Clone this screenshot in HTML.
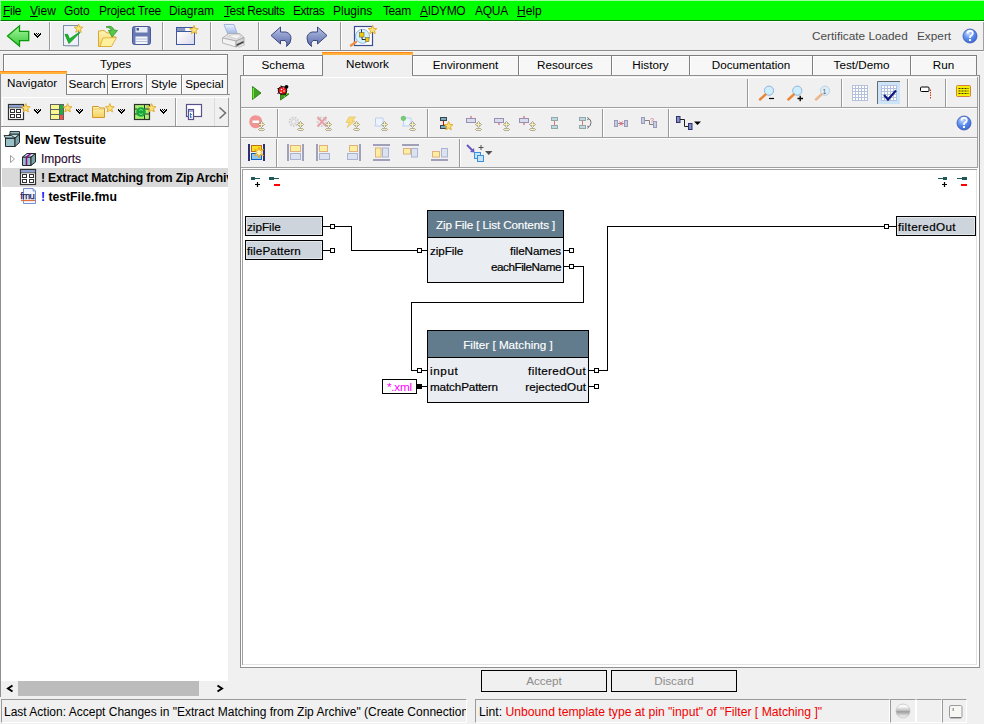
<!DOCTYPE html>
<html><head><meta charset="utf-8">
<style>
*{box-sizing:border-box;margin:0;padding:0}
html,body{width:984px;height:724px;overflow:hidden;background:#f0f0f0;font-family:"Liberation Sans",sans-serif;font-size:11.7px;color:#000}
.a{position:absolute}
.t{position:absolute;white-space:pre;line-height:14px;height:14px}
svg{position:absolute;overflow:visible}
#menu{left:0;top:0;width:984px;height:21px;background:#00ff00;border-top:1px solid #a0ffa0;border-left:1px solid #a0ffa0;border-bottom:1px solid #007800}
#menu span{position:absolute;top:3px;font-size:12px;letter-spacing:-0.1px;line-height:14px;white-space:pre}
u{text-decoration:underline;text-underline-offset:1px;text-decoration-thickness:1px}
.tab{position:absolute;background:#f7f7f7;border:1px solid #7f7f7f;border-bottom:none;box-shadow:inset 1px 1px 0 #fff;text-align:center;font-size:11.7px;line-height:18px;white-space:pre}
.sel{background:#f0f0f0;border:none;border-left:1px solid #7f7f7f;border-right:1px solid #7f7f7f;box-shadow:none}
.or{position:absolute;height:3px;background:#ffb13a;border-top:1px solid #ff8a1e}
.vsep{position:absolute;width:2px;border-left:1px solid #9a9a9a;border-right:1px solid #fff}
.hl{position:absolute;height:1px;background:#8f8f8f}
.vl{position:absolute;width:1px;background:#8f8f8f}
.wl{position:absolute;background:#fff}
.blk{position:absolute;border:1px solid #000;background:#eaedf2}
.hdr{position:absolute;left:0;top:0;right:0;height:27px;background:#627b8d;border-bottom:1px solid #000;color:#fff;text-align:center;line-height:27px;font-size:11.7px;white-space:pre;-webkit-text-stroke:0.15px #fff}
.pin{position:absolute;width:5px;height:5px;border:1px solid #000;background:#fff}
.ln{position:absolute;background:#000}
.io{position:absolute;height:20px;border:1px solid #000;background:#cdd4dc;box-shadow:inset 1px 1px 0 #e2e7ec,inset -1px -1px 0 #e2e7ec;font-size:11.7px;line-height:18px;padding-left:1px;padding-top:1px;white-space:pre;-webkit-text-stroke:0.2px #000}
.pl{position:absolute;white-space:pre;font-size:11.7px;line-height:14px;-webkit-text-stroke:0.2px #000}
</style></head><body>
<!-- ================= MENU ================= -->
<div id="menu" class="a">
<span style="left:2px;letter-spacing:-0.31px"><u>F</u>ile</span>
<span style="left:29px;letter-spacing:0.0px"><u>V</u>iew</span>
<span style="left:63px;letter-spacing:-0.11px">Goto</span>
<span style="left:98px;letter-spacing:-0.22px">Project Tree</span>
<span style="left:168px;letter-spacing:-0.06px">Diagram</span>
<span style="left:223px;letter-spacing:-0.4px"><u>T</u>est Results</span>
<span style="left:292px;letter-spacing:-0.44px">Extras</span>
<span style="left:332px;letter-spacing:0.0px">Plugins</span>
<span style="left:382px;letter-spacing:-0.4px">Team</span>
<span style="left:419px;letter-spacing:-0.33px"><u>A</u>IDYMO</span>
<span style="left:474px;letter-spacing:-0.27px">AQUA</span>
<span style="left:516px;letter-spacing:-0.03px"><u>H</u>elp</span>
</div>
<div class="wl" style="left:0;top:21px;width:984px;height:1px"></div>

<!-- ================= MAIN TOOLBAR ================= -->
<div class="hl" style="left:0;top:50px;width:984px;background:#8a8a8a"></div>
<div class="wl" style="left:0;top:51px;width:984px;height:1px;background:#f8f8f8"></div>
<div class="vl" style="left:983px;top:22px;height:29px;background:#a0a0a0"></div>
<div class="vsep" style="left:49px;top:22px;height:28px"></div>
<div class="vsep" style="left:162px;top:22px;height:28px"></div>
<div class="vsep" style="left:210px;top:22px;height:28px"></div>
<div class="vsep" style="left:258px;top:22px;height:28px"></div>
<div class="vsep" style="left:340px;top:22px;height:28px"></div>

<div class="t" style="left:812px;top:29px;color:#4a4a4a;font-size:11.8px">Certificate Loaded</div>
<div class="t" style="left:917px;top:29px;color:#4a4a4a;font-size:11.8px">Expert</div>

<!-- ================= LEFT PANEL ================= -->
<div class="tab" style="left:3px;top:54px;width:225px;height:21px">Types</div>
<div class="or" style="left:0;top:71px;width:67px"></div>
<div class="tab sel" style="left:0;top:74px;width:67px;height:21px;line-height:17px;text-align:left;padding-left:6px">Navigator</div>
<div class="tab" style="left:66px;top:74px;width:42px;height:20px">Search</div>
<div class="tab" style="left:107px;top:74px;width:40px;height:20px">Errors</div>
<div class="tab" style="left:146px;top:74px;width:36px;height:20px">Style</div>
<div class="tab" style="left:181px;top:74px;width:47px;height:20px">Special</div>
<div class="hl" style="left:66px;top:94px;width:164px"></div>
<div class="vl" style="left:0;top:74px;height:623px"></div>
<!-- panel toolbar -->
<div class="hl" style="left:1px;top:126px;width:228px"></div>
<div class="wl" style="left:2px;top:97px;width:226px;height:1px"></div>
<div class="wl" style="left:2px;top:97px;width:1px;height:29px"></div>
<div class="vl" style="left:228px;top:98px;height:29px;background:#a0a0a0"></div>
<div class="vsep" style="left:175px;top:98px;height:28px"></div>
<div class="vl" style="left:214px;top:98px;height:28px;background:#dcdcdc"></div>
<!-- tree -->
<div class="wl" style="left:1px;top:127px;width:227px;height:554px"></div>
<div class="a" style="left:2px;top:168px;width:226px;height:19px;background:#d9d9d9"></div>
<div class="t" style="left:25px;top:133px;font-weight:bold;font-size:12.2px">New Testsuite</div>
<div class="t" style="left:41px;top:152px;color:#2a0a30;font-size:12px;-webkit-text-stroke:0.15px #2a0a30">Imports</div>
<div class="a" style="left:41px;top:170px;width:187px;height:16px;overflow:hidden"><div class="t" style="left:0;top:1px;font-weight:bold;font-size:12.2px;letter-spacing:-0.2px">! Extract Matching from Zip Archive</div></div>
<div class="t" style="left:41px;top:190px;font-weight:bold;font-size:12.2px"><span style="color:#1010ff">!</span> testFile.fmu</div>
<!-- scrollbar -->
<div class="a" style="left:18px;top:681px;width:181px;height:15px;background:#bcbcbc"></div>

<!-- ================= RIGHT PANEL TABS ================= -->
<div class="tab" style="left:243px;top:55px;width:80px;height:21px">Schema</div>
<div class="or" style="left:322px;top:52px;width:91px"></div>
<div class="tab sel" style="left:322px;top:55px;width:91px;height:21px;line-height:18px">Network</div>
<div class="tab" style="left:412px;top:55px;width:107px;height:21px">Environment</div>
<div class="tab" style="left:518px;top:55px;width:94px;height:21px">Resources</div>
<div class="tab" style="left:611px;top:55px;width:79px;height:21px">History</div>
<div class="tab" style="left:689px;top:55px;width:124px;height:21px">Documentation</div>
<div class="tab" style="left:812px;top:55px;width:99px;height:21px">Test/Demo</div>
<div class="tab" style="left:910px;top:55px;width:67px;height:21px">Run</div>

<!-- content panel frame -->
<div class="hl" style="left:240px;top:75px;width:83px"></div>
<div class="hl" style="left:412px;top:75px;width:568px"></div>
<div class="vl" style="left:240px;top:75px;height:593px"></div>
<div class="vl" style="left:979px;top:75px;height:593px"></div>
<div class="hl" style="left:240px;top:667px;width:740px"></div>
<div class="wl" style="left:241px;top:77px;width:736px;height:1px"></div>
<!-- toolbar rows -->
<div class="hl" style="left:241px;top:107px;width:737px;background:#a0a0a0"></div>
<div class="wl" style="left:241px;top:108px;width:736px;height:1px"></div>
<div class="hl" style="left:241px;top:137px;width:737px;background:#a0a0a0"></div>
<div class="wl" style="left:241px;top:138px;width:736px;height:1px"></div>
<div class="hl" style="left:241px;top:167px;width:737px;background:#a0a0a0"></div>
<div class="vl" style="left:977px;top:77px;height:91px;background:#a0a0a0"></div>
<div class="vsep" style="left:747px;top:79px;height:28px"></div>
<div class="vsep" style="left:841px;top:79px;height:28px"></div>
<div class="vsep" style="left:907px;top:79px;height:28px"></div>
<div class="vsep" style="left:945px;top:79px;height:28px"></div>
<div class="vsep" style="left:277px;top:109px;height:28px"></div>
<div class="vsep" style="left:427px;top:109px;height:28px"></div>
<div class="vsep" style="left:602px;top:109px;height:28px"></div>
<div class="vsep" style="left:668px;top:109px;height:28px"></div>
<div class="vsep" style="left:276px;top:139px;height:28px"></div>
<div class="vsep" style="left:459px;top:139px;height:28px"></div>
<!-- canvas -->
<div class="wl" style="left:241px;top:168px;width:738px;height:499px"></div>
<div class="hl" style="left:242px;top:169px;width:735px;background:#a0a0a0"></div>
<div class="vl" style="left:242px;top:169px;height:496px;background:#a0a0a0"></div>
<div class="vl" style="left:976px;top:170px;height:495px;background:#e3e3e3"></div>
<div class="hl" style="left:243px;top:664px;width:734px;background:#e3e3e3"></div>

<!-- ================= DIAGRAM ================= -->
<div class="io" style="left:245px;top:216px;width:78px">zipFile</div>
<div class="io" style="left:245px;top:240px;width:78px;letter-spacing:0.12px">filePattern</div>
<div class="io" style="left:896px;top:216px;width:80px;letter-spacing:0.37px">filteredOut</div>

<div class="blk" style="left:427px;top:210px;width:137px;height:73px">
 <div class="hdr" style="letter-spacing:-0.14px">Zip File [ List Contents ]</div>
 <div class="pl" style="left:2px;top:33px;letter-spacing:-0.07px">zipFile</div>
 <div class="pl" style="right:2px;top:33px;letter-spacing:-0.12px">fileNames</div>
 <div class="pl" style="right:2px;top:49px;letter-spacing:-0.44px">eachFileName</div>
</div>
<div class="blk" style="left:427px;top:330px;width:162px;height:73px">
 <div class="hdr">Filter [ Matching ]</div>
 <div class="pl" style="left:2px;top:33px;letter-spacing:0.6px">input</div>
 <div class="pl" style="left:2px;top:49px;letter-spacing:-0.14px">matchPattern</div>
 <div class="pl" style="right:2px;top:33px;letter-spacing:0.36px">filteredOut</div>
 <div class="pl" style="right:2px;top:49px;letter-spacing:0.03px">rejectedOut</div>
</div>

<svg style="left:0;top:0" width="984" height="724" shape-rendering="crispEdges">
 <g stroke="#000" stroke-width="1" fill="none">
  <!-- zipFile -> zip block zipFile -->
  <path d="M323 226.5H330M335 226.5H351.5V250.5H417M422 250.5H427"/>
  <path d="M323 250.5H330"/>
  <!-- fileNames -->
  <path d="M564 250.5H569"/>
  <!-- eachFileName -> input -->
  <path d="M564 266.5H569M574 266.5H583.5V302.5H411.5V370.5H417M422 370.5H427"/>
  <!-- matchPattern -->
  <path d="M422 386.5H427"/>
  <!-- filteredOut -->
  <path d="M589 370.5H594M599 370.5H607.5V226.5H884M889 226.5H896"/>
  <path d="M589 386.5H594"/>
 </g>
 <g stroke="#000" fill="#fff">
  <rect x="330.5" y="224.5" width="4" height="4"/>
  <rect x="330.5" y="248.5" width="4" height="4"/>
  <rect x="417.5" y="248.5" width="4" height="4"/>
  <rect x="569.5" y="248.5" width="4" height="4"/>
  <rect x="569.5" y="264.5" width="4" height="4"/>
  <rect x="417.5" y="368.5" width="4" height="4"/>
  <rect x="594.5" y="368.5" width="4" height="4"/>
  <rect x="594.5" y="384.5" width="4" height="4"/>
  <rect x="884.5" y="224.5" width="4" height="4"/>
  <rect x="417.5" y="384.5" width="4" height="4" fill="#000"/>
  <rect x="382.5" y="379.5" width="34" height="14"/>
 </g>
</svg>
<div class="t" style="left:387px;top:380px;color:#ff00ff;font-size:11.7px;letter-spacing:-0.25px">*.xml</div>

<!-- ================= BOTTOM ================= -->
<div class="a" style="left:481px;top:670px;width:126px;height:22px;border:1px solid #000;color:#8c8c8c;text-align:center;line-height:19px">Accept</div>
<div class="a" style="left:611px;top:670px;width:126px;height:22px;border:1px solid #000;color:#8c8c8c;text-align:center;line-height:19px">Discard</div>
<!-- status bar -->
<div class="a" style="left:1px;top:699px;width:466px;height:24px;border-bottom:1px solid #fff;border-top:1px solid #9a9a9a;border-left:1px solid #9a9a9a;border-right:1px solid #fff;overflow:hidden"><div class="t" style="left:2px;top:5px;font-size:12px">Last Action: Accept Changes in "Extract Matching from Zip Archive" (Create Connection)</div></div>
<div class="a" style="left:475px;top:699px;width:415px;height:24px;border-bottom:1px solid #fff;border-top:1px solid #9a9a9a;border-left:1px solid #9a9a9a;border-right:1px solid #fff"><div class="t" style="left:3px;top:5px;font-size:12.2px">Lint: <span style="color:#f00000">Unbound template type at pin "input" of "Filter [ Matching ]"</span></div></div>
<div class="a" style="left:890px;top:699px;width:26px;height:24px;border-bottom:1px solid #fff;border-top:1px solid #9a9a9a;border-left:1px solid #9a9a9a;border-right:1px solid #fff"></div>
<div class="a" style="left:916px;top:699px;width:26px;height:24px;border-bottom:1px solid #fff;border-top:1px solid #9a9a9a;border-left:1px solid #fff;border-right:1px solid #fff"></div>
<div class="a" style="left:942px;top:699px;width:25px;height:24px;border-bottom:1px solid #fff;border-top:1px solid #9a9a9a;border-left:1px solid #9a9a9a;border-right:1px solid #fff"></div>
<!-- ================= ICONS ================= -->
<svg style="left:0;top:0" width="984" height="724">
<defs>
 <path id="star" d="M0.00,-4.60 L1.18,-1.62 L4.37,-1.42 L1.90,0.62 L2.70,3.72 L0.00,2.00 L-2.70,3.72 L-1.90,0.62 L-4.37,-1.42 L-1.18,-1.62Z" fill="#fbe27a" stroke="#e0a828" stroke-width="0.9" stroke-linejoin="round"/>
 <linearGradient id="gArrow" x1="0" y1="0" x2="0" y2="1"><stop offset="0" stop-color="#a8f8a0"/><stop offset="1" stop-color="#38c838"/></linearGradient>
 <linearGradient id="gBlueArr" x1="0" y1="0" x2="0" y2="1"><stop offset="0" stop-color="#b8c4e8"/><stop offset="1" stop-color="#5868a8"/></linearGradient>
 <radialGradient id="gHelp" cx="0.4" cy="0.3" r="0.8"><stop offset="0" stop-color="#c8dcff"/><stop offset="0.5" stop-color="#5a8cf0"/><stop offset="1" stop-color="#3860c8"/></radialGradient>
 <radialGradient id="gSphere" cx="0.5" cy="0.3" r="0.7"><stop offset="0" stop-color="#ffffff"/><stop offset="0.6" stop-color="#c8c8c8"/><stop offset="1" stop-color="#a0a0a0"/></radialGradient>
 <linearGradient id="gSphere2" x1="0" y1="0" x2="0" y2="1"><stop offset="0" stop-color="#e8e8e8"/><stop offset="0.15" stop-color="#ffffff"/><stop offset="0.45" stop-color="#c4c4c4"/><stop offset="0.55" stop-color="#9c9c9c"/><stop offset="0.8" stop-color="#d8d8d8"/><stop offset="1" stop-color="#f4f4f4"/></linearGradient>
 <linearGradient id="gFolder" x1="0" y1="0" x2="0" y2="1"><stop offset="0" stop-color="#fff4b8"/><stop offset="1" stop-color="#f4d060"/></linearGradient>
 <g id="dchev" fill="#000" shape-rendering="crispEdges"><rect x="0" y="0" width="1" height="1"/><rect x="2" y="0" width="1" height="1"/><rect x="4" y="0" width="1" height="1"/><rect x="6" y="0" width="1" height="1"/><rect x="0" y="1" width="1" height="1"/><rect x="1" y="1" width="1" height="1"/><rect x="3" y="1" width="1" height="1"/><rect x="5" y="1" width="1" height="1"/><rect x="6" y="1" width="1" height="1"/><rect x="1" y="2" width="1" height="1"/><rect x="2" y="2" width="1" height="1"/><rect x="4" y="2" width="1" height="1"/><rect x="5" y="2" width="1" height="1"/><rect x="2" y="3" width="1" height="1"/><rect x="3" y="3" width="1" height="1"/><rect x="4" y="3" width="1" height="1"/><rect x="3" y="4" width="1" height="1"/></g>
 <g id="plus" shape-rendering="crispEdges"><g fill="#9a9a90" opacity="0.75"><rect x="0" y="-3" width="1" height="1"/><rect x="-1" y="-2" width="1" height="1"/><rect x="1" y="-2" width="1" height="1"/><rect x="-2" y="-1" width="1" height="1"/><rect x="-1" y="-1" width="1" height="1"/><rect x="1" y="-1" width="1" height="1"/><rect x="2" y="-1" width="1" height="1"/><rect x="-3" y="0" width="1" height="1"/><rect x="3" y="0" width="1" height="1"/><rect x="-2" y="1" width="1" height="1"/><rect x="-1" y="1" width="1" height="1"/><rect x="1" y="1" width="1" height="1"/><rect x="2" y="1" width="1" height="1"/><rect x="-1" y="2" width="1" height="1"/><rect x="1" y="2" width="1" height="1"/><rect x="0" y="3" width="1" height="1"/><rect x="-2" y="4" width="1" height="1"/><rect x="-2" y="6" width="1" height="1"/><rect x="-1" y="4" width="1" height="1"/><rect x="-1" y="6" width="1" height="1"/><rect x="0" y="4" width="1" height="1"/><rect x="0" y="6" width="1" height="1"/><rect x="1" y="4" width="1" height="1"/><rect x="1" y="6" width="1" height="1"/><rect x="2" y="4" width="1" height="1"/><rect x="2" y="6" width="1" height="1"/><rect x="-3" y="5" width="1" height="1"/><rect x="3" y="5" width="1" height="1"/></g><g fill="#fbeea8"><rect x="0" y="-2" width="1" height="1"/><rect x="0" y="-1" width="1" height="1"/><rect x="-2" y="0" width="1" height="1"/><rect x="-1" y="0" width="1" height="1"/><rect x="0" y="0" width="1" height="1"/><rect x="1" y="0" width="1" height="1"/><rect x="2" y="0" width="1" height="1"/><rect x="0" y="1" width="1" height="1"/><rect x="0" y="2" width="1" height="1"/><rect x="-2" y="5" width="1" height="1"/><rect x="-1" y="5" width="1" height="1"/><rect x="0" y="5" width="1" height="1"/><rect x="1" y="5" width="1" height="1"/><rect x="2" y="5" width="1" height="1"/></g></g>
</defs>

<!-- main toolbar -->
<path d="M7.5,36 L19.5,25.8 V31.3 H28.7 V40.7 H19.5 V46.2Z" fill="url(#gArrow)" stroke="#089808" stroke-width="1.3" stroke-linejoin="miter"/>
<use href="#dchev" x="34" y="33"/>

<rect x="63.5" y="25.5" width="15" height="20" fill="#f0f0f8" stroke="#7890a8" stroke-width="1"/>
<rect x="65" y="45.5" width="14" height="1" fill="#a8b4c0"/>
<path d="M65,34.5 L69,43.5 L80,32.5 L77.5,33.5 L69.5,39 L67.5,34.2Z" fill="#18b828" stroke="#089020" stroke-width="0.8"/>
<use href="#star" x="78.5" y="28.6"/>

<path d="M98.5,46.5 L98.5,31 L104,30.5 L107,33 L113,33 L113,37 L116,37 L111,46.5Z" fill="url(#gFolder)" stroke="#d8a830" stroke-width="1"/>
<path d="M100,46.5 L103,38 L116.5,37.5 L111.5,46.5Z" fill="#fff0a0" stroke="#d8a830" stroke-width="0.8"/>
<path d="M106,27 Q112,24.5 114,30 L117.5,30.5 L112,37 L108.5,30.5 L111.5,30.5 Q110.5,27.5 106,27Z" fill="#58c848" stroke="#309828" stroke-width="0.8"/>

<rect x="132.5" y="26.5" width="18" height="18" rx="2" fill="#6878b0" stroke="#485898" stroke-width="1"/>
<rect x="135.5" y="27" width="12" height="5.5" fill="#e8ecf8"/>
<rect x="136.5" y="28" width="2.5" height="2.5" fill="#485898"/>
<rect x="135.5" y="36.5" width="12" height="7.5" fill="#f4f6fc"/>
<path d="M136,39H147M136,41.5H147" stroke="#a8b4d0" stroke-width="0.8"/>

<defs><linearGradient id="gWin" x1="0" y1="0" x2="1" y2="1"><stop offset="0.3" stop-color="#fcf8fa"/><stop offset="1" stop-color="#d8d8ec"/></linearGradient></defs>
<rect x="176.5" y="27.5" width="18" height="17" fill="url(#gWin)" stroke="#4058a0" stroke-width="1"/>
<rect x="177" y="28" width="8.5" height="3.5" fill="#8898c0"/>
<rect x="185.5" y="28" width="8.5" height="3.5" fill="#ffffff"/>
<path d="M177,31.5H194" stroke="#4058a0" stroke-width="1"/>
<use href="#star" x="194" y="30"/>

<defs><linearGradient id="gPaper" x1="0" y1="0" x2="0" y2="1"><stop offset="0" stop-color="#eef4fe"/><stop offset="1" stop-color="#98b0e4"/></linearGradient></defs>
<path d="M224,24.5 L234,24.5 L237.5,34.5 L228,34.5Z" fill="url(#gPaper)" stroke="#90a8d8" stroke-width="0.8"/>
<path d="M222.5,38 L228.5,33.5 L240,33.5 L244,37.5 L236,41Z" fill="#e2e2e2" stroke="#a8a8a8" stroke-width="0.8"/>
<path d="M228.5,36.5 L232,34.8 L239,34.8 L241,36.5 L236.5,38.8Z" fill="#f6f6f6" stroke="#c4c4c4" stroke-width="0.7"/>
<path d="M222.5,38 L236,41 L236,47 L222.5,43Z" fill="#f2f2f2" stroke="#a8a8a8" stroke-width="0.8"/>
<path d="M236,41 L244,37.5 L244,43 L236,47Z" fill="#d4d4d4" stroke="#a0a0a0" stroke-width="0.8"/>
<path d="M236.5,44.2 L243.5,41 L243.5,43 L236.5,46.3Z" fill="#404040"/>
<path d="M237.5,46 L243,43.3 L245,44.5 L239,47.3Z" fill="#ececec" stroke="#a8a8a8" stroke-width="0.6"/>

<path id="undo" d="M271,35.5 L280.5,27 V32 H286 Q291,33.5 291,38.5 Q291,43.5 286.5,46.5 Q288,42.5 285,40.5 H280.5 V44Z" fill="url(#gBlueArr)" stroke="#303c78" stroke-width="0.9" stroke-linejoin="round"/>
<use href="#undo" transform="translate(598,0) scale(-1,1)"/>

<rect x="354.5" y="26.5" width="18" height="19" fill="#fff" stroke="#3c4c90" stroke-width="1.2"/>
<circle cx="362.5" cy="36.3" r="7" fill="#d4f4fc" stroke="#98b0d8" stroke-width="1"/>
<rect x="359.5" y="32.5" width="4.5" height="4.5" fill="#f8c800" stroke="#706850" stroke-width="0.6"/>
<rect x="365.5" y="37.5" width="3.5" height="4" fill="#f8c800" stroke="#706850" stroke-width="0.6"/>
<path d="M361.5,29.5V32.5M362,37V39.5H365.5" fill="none" stroke="#000" stroke-width="0.8"/>
<path d="M351,45.5 L356,42" stroke="#f09040" stroke-width="2.5" stroke-linecap="round"/>
<use href="#star" x="372.5" y="30"/>

<circle cx="970" cy="36" r="7" fill="url(#gHelp)" stroke="#3858b0" stroke-width="0.8"/>
<path d="M967.5,33.5 Q967.5,30.8 970,30.8 Q972.8,30.8 972.8,33.3 Q972.8,35 970.8,35.8 Q970,36.3 970,38" fill="none" stroke="#fff" stroke-width="1.8"/>
<rect x="969" y="39" width="2" height="2" fill="#fff"/>

<!-- left panel toolbar -->
<rect x="8.5" y="104.5" width="15" height="15" fill="#fff" stroke="#303030" stroke-width="1.2"/>
<rect x="9" y="105" width="14" height="2.5" fill="#8aa0d0"/>
<path d="M8.5,107.8H23.5" stroke="#303030" stroke-width="0.8"/>
<g fill="none" stroke="#303030" stroke-width="1"><rect x="10.5" y="109.5" width="4" height="3"/><rect x="16.5" y="109.5" width="4" height="3"/><rect x="10.5" y="114.5" width="4" height="3"/><rect x="16.5" y="114.5" width="4" height="3"/></g>
<use href="#star" x="25.8" y="108.2"/>
<use href="#dchev" x="34" y="109"/>

<rect x="50.5" y="104.5" width="13" height="15" fill="#f8f890" stroke="#606060" stroke-width="1"/>
<path d="M51,109.5H63M51,114.5H63M59.5,105V119" stroke="#606060" stroke-width="1"/>
<rect x="60" y="105" width="3" height="4.5" fill="#20b040"/><rect x="60" y="110" width="3" height="4.5" fill="#20b040"/><rect x="60" y="115" width="3" height="4.5" fill="#f05050"/>
<use href="#star" x="67.6" y="108.2"/>
<use href="#dchev" x="76" y="109"/>

<path d="M92.5,117.5 V106.5 H98.5 L100,108 H104.5 V117.5Z" fill="url(#gFolder)" stroke="#d09828" stroke-width="1"/>
<path d="M92.5,109H104.5" stroke="#e8c050" stroke-width="0.8"/>
<use href="#star" x="109.8" y="108.2"/>
<use href="#dchev" x="118" y="109"/>

<rect x="134.5" y="104.5" width="15" height="15" fill="#a8f070" stroke="#303030" stroke-width="1.2"/>
<path d="M144.5,105V119M144.5,109H149M144.5,114H149M135,109H137M135,114H137" stroke="#303030" stroke-width="1"/>
<circle cx="141" cy="112" r="4.8" fill="#18a838"/>
<path d="M139,110.5 Q141,108.5 143,110.5M139,113.5 Q141,115.5 143,113.5" fill="none" stroke="#9ce8a8" stroke-width="0.8"/>
<use href="#star" x="151.6" y="108.2"/>
<use href="#dchev" x="160" y="109"/>

<rect x="186.5" y="104.5" width="15" height="12" fill="#fff" stroke="#5a5090" stroke-width="1.2"/>
<rect x="188.5" y="109.5" width="5" height="10" fill="#fff" stroke="#5a5090" stroke-width="1.2"/>
<rect x="189" y="110" width="4" height="2" fill="#a8b0d0"/>
<path d="M190.5,113V118M190.5,114.5H192M190.5,117H192" stroke="#3880d0" stroke-width="1"/>
<path d="M219.5,107.5 L225.5,113 L219.5,118.5" fill="none" stroke="#707070" stroke-width="1.6"/>

<!-- tree icons -->
<path d="M5.5,138 L15,138 L15,146.5 L5.5,146.5Z" fill="#98c0c8" stroke="#202828" stroke-width="1"/>
<path d="M15,138 L19.5,134 L19.5,142.5 L15,146.5Z" fill="#7aa0a8" stroke="#202828" stroke-width="1"/>
<path d="M5.5,138 L10,134 L19.5,134 L15,138Z" fill="#c0dce0" stroke="#202828" stroke-width="1"/>
<path d="M4,135.5 L5.5,138 L15,138 L11.5,135.5Z" fill="#b0d0d8" stroke="#202828" stroke-width="0.9"/>
<path d="M10,134 L10,131.5 L19.5,131.5 L19.5,134Z" fill="#98c0c8" stroke="#202828" stroke-width="0.9"/>
<path d="M10.5,155.5 L14.5,159 L10.5,162.5Z" fill="#fff" stroke="#a0a0a0" stroke-width="1"/>
<path d="M22.5,157 L31,157 L31,165.5 L22.5,165.5Z" fill="#98c0c8" stroke="#202828" stroke-width="1"/>
<path d="M31,157 L35.5,153.5 L35.5,162 L31,165.5Z" fill="#7aa0a8" stroke="#202828" stroke-width="1"/>
<path d="M22.5,157 L27,153.5 L35.5,153.5 L31,157Z" fill="#c0dce0" stroke="#202828" stroke-width="1"/>
<path d="M26.5,157V165.5M26.5,157 L31,153.5" fill="none" stroke="#900090" stroke-width="1.5"/>
<rect x="20.5" y="169.5" width="15" height="15" fill="#fff" stroke="#303030" stroke-width="1.2"/>
<rect x="21" y="170" width="14" height="2.5" fill="#8aa0d0"/>
<path d="M20.5,172.8H35.5" stroke="#303030" stroke-width="0.8"/>
<g fill="none" stroke="#303030" stroke-width="1"><rect x="22.5" y="174.5" width="4" height="3"/><rect x="29.5" y="174.5" width="4" height="3"/><rect x="22.5" y="179.5" width="4" height="3"/><rect x="29.5" y="179.5" width="4" height="3"/></g>
<path d="M23.5,188.5 H33 L35.5,191 V203.5 H23.5Z" fill="#f2f6fe" stroke="#7890d0" stroke-width="1"/>
<path d="M33,188.5V191H35.5" fill="#a8c8f0" stroke="#7890d0" stroke-width="0.8"/>
<text x="20.3" y="199" font-family="Liberation Sans" font-size="9.5" fill="#20205a" letter-spacing="-0.7" stroke="#20205a" stroke-width="0.25">fmu</text>
<path d="M21,200.5H35" stroke="#e07040" stroke-width="1.2"/>

<!-- row1 right panel -->
<path d="M252.5,86.5 L261,93 L252.5,99.5Z" fill="#40a020" stroke="#287818" stroke-width="0.9"/>
<path d="M253.3,88 V98.5" stroke="#70f030" stroke-width="1.2"/>
<path d="M280.5,92 L289,94 L280.5,100Z" fill="#40a020" stroke="#287818" stroke-width="0.9"/>
<path d="M284,97 L288,93" stroke="#70e030" stroke-width="1"/>
<path d="M277.5,88.5H280M281,85.5 L282,87M284.5,94 L286.5,95.5M279,92.5 L277.5,94" stroke="#000" stroke-width="1"/>
<ellipse cx="282.5" cy="90.5" rx="4.2" ry="3.8" fill="#e81818" stroke="#000" stroke-width="1"/>
<circle cx="286.5" cy="86.8" r="1.9" fill="#000"/>
<circle cx="281.5" cy="89.5" r="0.8" fill="#fff"/><circle cx="284" cy="91" r="0.8" fill="#fff"/><circle cx="281" cy="92.3" r="0.8" fill="#fff"/><circle cx="283.5" cy="88" r="0.6" fill="#fff"/>

<g id="zoomlens"><circle cx="769" cy="90.7" r="4.6" fill="#cdeefc" stroke="#90b4e0" stroke-width="1"/><path d="M760,99.5 L765.5,94.5" stroke="#e88838" stroke-width="2.4" stroke-linecap="round"/></g>
<path d="M769,98.5H774" stroke="#000" stroke-width="1.2"/>
<use href="#zoomlens" x="28.3"/>
<path d="M797.5,98.5H803M800.2,95.8V101.2" stroke="#000" stroke-width="1.3"/>
<g opacity="0.55"><use href="#zoomlens" x="56"/></g>
<text x="822.5" y="94" font-family="Liberation Sans" font-size="7" fill="#606060">1</text>

<g id="grid" shape-rendering="crispEdges"><rect x="852" y="85" width="16" height="16" fill="#fff"/><path d="M852,85.5H868M852,88.5H868M852,91.5H868M852,94.5H868M852,97.5H868M852,100.5H868M852.5,85V101M855.5,85V101M858.5,85V101M861.5,85V101M864.5,85V101M867.5,85V101" stroke="#b4c0dc" stroke-width="1"/></g>
<rect x="877" y="81" width="23" height="23" fill="#cce4f8"/>
<path d="M877.5,104V81.5H900" fill="none" stroke="#6a6a6a" stroke-width="1"/>
<use href="#grid" x="29"/>
<path d="M884,95 L888,99.5 L896,90.5" fill="none" stroke="#0c1880" stroke-width="2.2"/>

<rect x="920.5" y="87" width="8.5" height="4.5" rx="1" fill="#fff" stroke="#000" stroke-width="1"/>
<path d="M930.5,89.5V99" stroke="#e03010" stroke-width="1" stroke-dasharray="1.5,1"/>
<rect x="956.5" y="85.5" width="14" height="11" rx="1" fill="#f8f000" stroke="#d08040" stroke-width="1"/>
<path d="M958.5,88.5H968.5M958.5,91H968.5M958.5,93.5H968.5" stroke="#000" stroke-width="0.8" stroke-dasharray="2,1"/>

<!-- row2 -->
<circle cx="255.7" cy="121.7" r="6.5" fill="#f09494"/>
<rect x="252.5" y="120.5" width="6.5" height="2.5" fill="#fff"/>
<use href="#plus" x="261" y="124"/>
<g opacity="0.6"><circle cx="293.8" cy="121.7" r="4.2" fill="none" stroke="#b8b8b8" stroke-width="2" stroke-dasharray="1.6,1.3"/><circle cx="293.8" cy="121.7" r="2.3" fill="none" stroke="#c0c0c0" stroke-width="1"/></g>
<use href="#plus" x="300" y="124"/>
<g opacity="0.6"><circle cx="322" cy="121.7" r="4.2" fill="none" stroke="#b8b8b8" stroke-width="2" stroke-dasharray="1.6,1.3"/></g>
<path d="M317.5,117 L326.5,126.5M326.5,117 L317.5,126.5" stroke="#e8a0a8" stroke-width="2"/>
<use href="#plus" x="328" y="124"/>
<path d="M349,117 L355.5,117 L352,121 L355,121 L347,127.5 L349.5,122.5 L346,122.5Z" fill="#f8dc78" stroke="#e8c060" stroke-width="0.7"/>
<use href="#plus" x="356" y="124"/>
<path d="M375.5,118 H383 V126 H374.5 Q376.5,125 375.5,123Z" fill="#eef4fc" stroke="#b8d0f0" stroke-width="1"/>
<use href="#plus" x="384" y="124"/>
<path d="M403.5,118 H411 V126 H402.5 Q404.5,125 403.5,123Z" fill="#eef4fc" stroke="#b8d0f0" stroke-width="1"/>
<circle cx="403.4" cy="118.3" r="2.6" fill="#78c878"/>
<use href="#plus" x="412" y="124"/>

<rect x="440.5" y="117.5" width="6" height="3" fill="#80a8b8" stroke="#304850" stroke-width="1"/>
<rect x="440.5" y="125.5" width="6" height="3" fill="#80a8b8" stroke="#304850" stroke-width="1"/>
<path d="M443.5,121V125" stroke="#f00000" stroke-width="1"/>
<use href="#star" x="448.6" y="126.1"/>

<g id="pinrect"><rect x="466.5" y="118.5" width="9" height="4" fill="#d8dcec" stroke="#9890b0" stroke-width="1"/></g>
<path d="M471,116V118" stroke="#e06070" stroke-width="1.2"/>
<use href="#plus" x="478" y="124"/>
<use href="#pinrect" x="28"/>
<path d="M499,123V125" stroke="#e06070" stroke-width="1.2"/>
<use href="#plus" x="506" y="124"/>
<use href="#pinrect" x="53"/>
<path d="M524,116V118M524,123V125" stroke="#e06070" stroke-width="1.2"/>
<use href="#plus" x="532" y="124"/>

<rect x="551.5" y="117.5" width="6" height="3" fill="#c0d8e0" stroke="#90a8a8" stroke-width="1"/>
<rect x="551.5" y="125.5" width="6" height="3" fill="#c0d8e0" stroke="#90a8a8" stroke-width="1"/>
<path d="M554.5,121V125" stroke="#f07070" stroke-width="1"/>
<rect x="579.5" y="117.5" width="6" height="3" fill="#c0d8e0" stroke="#90a8a8" stroke-width="1"/>
<rect x="579.5" y="125.5" width="6" height="3" fill="#c0d8e0" stroke="#90a8a8" stroke-width="1"/>
<path d="M582.5,121V125" stroke="#f07070" stroke-width="1"/>
<path d="M588,118.5 Q591,119 591,122.5 Q591,126.5 588,127" fill="none" stroke="#707070" stroke-width="1"/>
<path d="M587,117.5 L589,118.5 L587,120M587,126 L589,127 L587,128.5" fill="none" stroke="#707070" stroke-width="0.8"/>

<rect x="614.5" y="120.5" width="3" height="6" fill="#c8cce0" stroke="#9898b8" stroke-width="1"/>
<rect x="624.5" y="120.5" width="3" height="6" fill="#c8cce0" stroke="#9898b8" stroke-width="1"/>
<path d="M618,123.5H624" stroke="#909090" stroke-width="1"/>
<path d="M619.5,121.5L622.5,125.5M622.5,121.5L619.5,125.5" stroke="#e06070" stroke-width="1"/>
<rect x="641.5" y="117.5" width="3" height="6" fill="#c8cce0" stroke="#9898b8" stroke-width="1"/>
<rect x="653.5" y="121.5" width="3" height="6" fill="#c8cce0" stroke="#9898b8" stroke-width="1"/>
<path d="M645,120.5H649.5V124.5H653" fill="none" stroke="#808080" stroke-width="1"/>
<text x="650" y="123" font-family="Liberation Sans" font-size="7" fill="#e06070">?</text>

<rect x="676.5" y="116.5" width="3.5" height="6" fill="#8090c0" stroke="#303070" stroke-width="1"/>
<rect x="688.5" y="123.5" width="3.5" height="6" fill="#8090c0" stroke="#303070" stroke-width="1"/>
<path d="M680,119.5H684.5V126.5H688" fill="none" stroke="#202020" stroke-width="1"/>
<path d="M694,121.5H701L697.5,125Z" fill="#000"/>

<circle cx="964" cy="123" r="7" fill="url(#gHelp)" stroke="#3858b0" stroke-width="0.8"/>
<path d="M961.5,120.5 Q961.5,117.8 964,117.8 Q966.8,117.8 966.8,120.3 Q966.8,122 964.8,122.8 Q964,123.3 964,125" fill="none" stroke="#fff" stroke-width="1.8"/>
<rect x="963" y="126" width="2" height="2" fill="#fff"/>

<!-- row3 -->
<rect x="248" y="144" width="2" height="17" fill="#303070"/>
<rect x="263" y="144" width="2" height="17" fill="#303070"/>
<rect x="251.5" y="145.5" width="10" height="6" fill="#f8e020" stroke="#c07010" stroke-width="1"/>
<rect x="251.5" y="153.5" width="10" height="6" fill="#90c8f0" stroke="#1060c0" stroke-width="1"/>
<path d="M259,147 L260,150.5 L263.5,149.5 L261,152.5 L263.5,155.5 L260,154.5 L259,158 L258,154.5 L254.5,155.5 L257,152.5 L254.5,149.5 L258,150.5Z" fill="#fff8c0" stroke="#f0a010" stroke-width="0.9"/>

<g id="alv"><rect x="287" y="144" width="2" height="17" fill="#a0a0b8"/>
<rect x="290.5" y="145.5" width="10" height="6" fill="#fcf0a0" stroke="#e0b080" stroke-width="1"/>
<rect x="290.5" y="153.5" width="10" height="6" fill="#dce2f0" stroke="#a8b4d0" stroke-width="1"/></g>
<rect x="302" y="144" width="2" height="17" fill="#a0a0b8"/>
<rect x="316" y="144" width="2" height="17" fill="#a0a0b8"/>
<rect x="319.5" y="145.5" width="8" height="6" fill="#fcf0a0" stroke="#e0b080" stroke-width="1"/>
<rect x="319.5" y="153.5" width="10" height="6" fill="#dce2f0" stroke="#a8b4d0" stroke-width="1"/>
<rect x="359" y="144" width="2" height="17" fill="#a0a0b8"/>
<rect x="349.5" y="145.5" width="8" height="6" fill="#fcf0a0" stroke="#e0b080" stroke-width="1"/>
<rect x="347.5" y="153.5" width="10" height="6" fill="#dce2f0" stroke="#a8b4d0" stroke-width="1"/>
<rect x="373" y="144" width="17" height="2" fill="#a0a0b8"/>
<rect x="373" y="159" width="17" height="2" fill="#a0a0b8"/>
<rect x="375.5" y="148" width="5.5" height="9" fill="#fcf0a0" stroke="#e0b080" stroke-width="1"/>
<rect x="382.5" y="148" width="6" height="9" fill="#dce2f0" stroke="#a8b4d0" stroke-width="1"/>
<rect x="402" y="144" width="17" height="2" fill="#a0a0b8"/>
<rect x="403.5" y="148.5" width="7" height="5.5" fill="#fcf0a0" stroke="#e0b080" stroke-width="1"/>
<rect x="411.5" y="148.5" width="6" height="8.5" fill="#dce2f0" stroke="#a8b4d0" stroke-width="1"/>
<rect x="431" y="159" width="17" height="2" fill="#a0a0b8"/>
<rect x="432.5" y="151.5" width="7" height="5.5" fill="#fcf0a0" stroke="#e0b080" stroke-width="1"/>
<rect x="441.5" y="148.5" width="6" height="8.5" fill="#dce2f0" stroke="#a8b4d0" stroke-width="1"/>

<path d="M467,145 L473,151" stroke="#6858c0" stroke-width="2"/>
<path d="M474.5,152.5 L470,152 L474,148Z" fill="#6858c0"/>
<rect x="474.5" y="152.5" width="6" height="6" fill="#c8e4fc" stroke="#3890e0" stroke-width="1"/>
<rect x="477.5" y="155.5" width="6" height="6" fill="#c8e4fc" stroke="#3890e0" stroke-width="1"/>
<path d="M478.5,147.5H483.5M481,145V150" stroke="#505050" stroke-width="1"/>
<path d="M485,151H492.5L488.75,155Z" fill="#505050"/>

<!-- canvas pin icons -->
<g fill="#1e5a5a"><rect x="251" y="177" width="4" height="3"/><rect x="255" y="178" width="5" height="1"/>
<rect x="269" y="177" width="5" height="3"/><rect x="274" y="178" width="5" height="1"/>
<rect x="943" y="177" width="4" height="3"/><rect x="938" y="178" width="5" height="1"/>
<rect x="962" y="177" width="5" height="3"/><rect x="957" y="178" width="5" height="1"/></g>
<path d="M255,184.5H260M257.5,182V187M942,184.5H947M944.5,182V187" stroke="#000" stroke-width="1.2"/>
<rect x="274" y="184" width="6" height="2" fill="#f00"/>
<rect x="961" y="184" width="6" height="2" fill="#f00"/>

<!-- scrollbar arrows -->
<path d="M12.5,685.5 L8,688.5 L12.5,691.5" fill="none" stroke="#000" stroke-width="2"/>
<path d="M217.5,685.5 L222,688.5 L217.5,691.5" fill="none" stroke="#000" stroke-width="2"/>

<!-- status icons -->
<circle cx="903" cy="711" r="7" fill="url(#gSphere2)" stroke="#b8b8b8" stroke-width="0.6"/>
<rect x="949.5" y="705.5" width="12.5" height="12.5" rx="1.5" fill="#f6f6f2" stroke="#9a9a9a" stroke-width="1"/>
<path d="M950.5,717.6H961" stroke="#707070" stroke-width="1"/>
<rect x="952.5" y="708" width="1.5" height="3" fill="#a0a0a0"/>
</svg>
</body></html>
